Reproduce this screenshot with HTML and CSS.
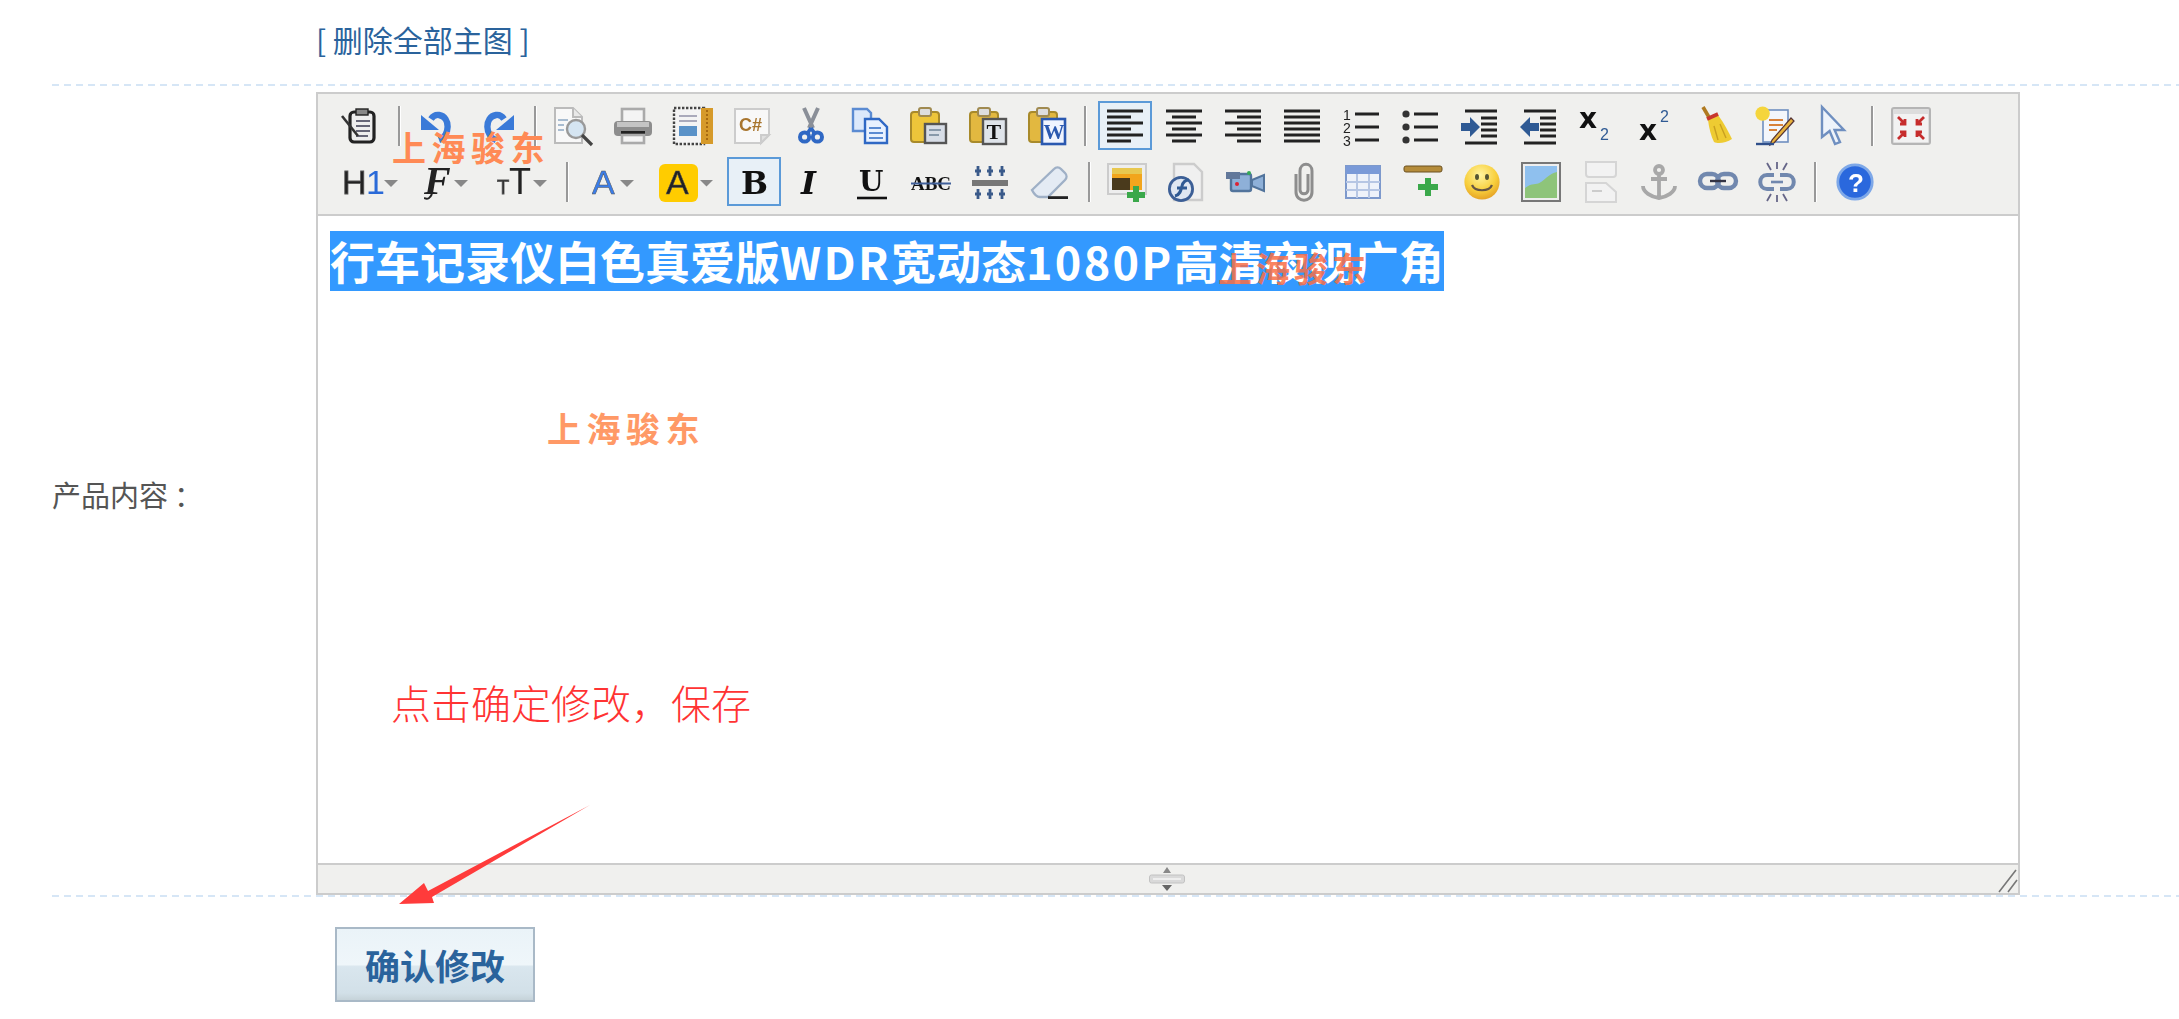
FILE: index.html
```html
<!DOCTYPE html>
<html lang="zh-CN">
<head>
<meta charset="utf-8">
<title>产品内容</title>
<link rel="stylesheet" href="styles.css">
</head>
<body>
<div class="page">
  <div class="top-row"><a class="link">[ 删除全部主图 ]</a></div>
  <div class="form-row">
    <div class="label">产品内容<span class="colon">：</span></div>
    <div class="editor">
      <div class="toolbar">
        <div class="tb-row">
          <span class="btn"><svg class="ic" viewBox="0 0 20 20"><rect x="5" y="3" width="12" height="15" rx="2" fill="#eee" stroke="#222" stroke-width="1.6"/><rect x="8" y="1.5" width="6" height="3" fill="#888" stroke="#222" stroke-width=".7"/><path d="M8 7.500h7M8 10h7M8 12.500h7M8 15h6" stroke="#667" stroke-width=".9"/><path d="M1 5l8 10" stroke="#333" stroke-width="1.300"/></svg></span>
          <i class="sep"></i>
          <span class="btn"><svg class="ic" viewBox="0 0 20 20"><path d="M10.500 17C16 15 16.500 5.500 10.500 4.500C8.500 4.200 7.500 5 6.500 6.500" fill="none" stroke="#3a7ad8" stroke-width="3.200"/><path d="M1.500 4.500v7.500h9z" fill="#3a7ad8"/></svg></span>
          <span class="btn"><svg class="ic" viewBox="0 0 20 20"><path d="M9.500 17C4 15 3.500 5.500 9.500 4.500C11.500 4.200 12.500 5 13.500 6.500" fill="none" stroke="#3a7ad8" stroke-width="3.200"/><path d="M18.500 4.500v7.500h-9z" fill="#3a7ad8"/></svg></span>
          <i class="sep"></i>
          <span class="btn"><svg class="ic" viewBox="0 0 20 20"><path d="M0.500 1h9l4.500 4.500v13h-13.500z" fill="#f8f8f8" stroke="#bbb"/><path d="M9.500 1v4.500h4.500" fill="#e8e8e8" stroke="#bbb"/><path d="M2 7h5M2 9.500h3M2 12h3" stroke="#a8bcd0"/><circle cx="11" cy="11.500" r="4.500" fill="#d5e5f2" stroke="#999" stroke-width="1.200"/><path d="M14 14.500l5 5" stroke="#444" stroke-width="1.600"/></svg></span>
          <span class="btn"><svg class="ic" viewBox="0 0 20 20"><rect x="4.500" y="1.500" width="11" height="8" fill="#f4f4f4" stroke="#aaa" stroke-width="1.300"/><rect x="0.500" y="7.500" width="19" height="7.500" rx="2" fill="#8d8d8d"/><rect x="2" y="8" width="16" height="2.500" fill="#c4c4c4"/><rect x="4" y="12.500" width="12" height="2" fill="#222"/><rect x="4.500" y="14.500" width="11" height="4" fill="#f4f4f4" stroke="#aaa" stroke-width="1.300"/></svg></span>
          <span class="btn"><svg class="ic" viewBox="0 0 20 20"><rect x="0.500" y="1" width="19" height="18" fill="#f4f4f4"/><rect x="0.500" y="1" width="15" height="18" fill="none" stroke="#444" stroke-width="1.200" stroke-dasharray="1.200 .8"/><path d="M3 5h9M3 7.500h9" stroke="#aab"/><rect x="3" y="10" width="9" height="5" fill="#5a92c8"/><rect x="14" y="1" width="6" height="18" fill="#d69a2a"/><path d="M17 2v16" stroke="#a86a10" stroke-dasharray="1 1"/></svg></span>
          <span class="btn"><svg class="ic" viewBox="0 0 20 20"><path d="M1.500 1.500h17v13l-4 4h-13z" fill="#f8f8f8" stroke="#ccc"/><path d="M18.500 14.500h-4v4z" fill="#e0e0e0" stroke="#ccc"/><text x="3.500" y="12.500" class="svg-bold" font-size="9" fill="#a8752e">C#</text></svg></span>
          <span class="btn"><svg class="ic" viewBox="0 0 20 20"><path d="M6.500 1l4.500 10M13.500 1l-4.500 10" stroke="#8a8f98" stroke-width="2"/><circle cx="6.800" cy="15.500" r="2.300" fill="none" stroke="#2f68c4" stroke-width="2"/><circle cx="13.200" cy="15.500" r="2.300" fill="none" stroke="#2f68c4" stroke-width="2"/><path d="M10 11l-2 3M10 11l2 3" stroke="#2f68c4" stroke-width="1.800"/></svg></span>
          <span class="btn"><svg class="ic" viewBox="0 0 20 20"><path d="M1.500 1.500h7l2 2v9h-9z" fill="#dce9fb" stroke="#5b8bd2" stroke-width="1.200"/><path d="M7.500 6.500h7l4 4v8h-11z" fill="#e8f1ff" stroke="#2f68c4" stroke-width="1.200"/><path d="M9.500 11h6M9.500 13.500h7M9.500 16h7" stroke="#5b8bd2"/></svg></span>
          <span class="btn"><svg class="ic" viewBox="0 0 20 20"><rect x="1" y="3" width="14" height="15" rx="1.500" fill="#edc53a" stroke="#a88a2a"/><rect x="5" y="1" width="6" height="4" rx="1" fill="#ddd" stroke="#a08a50"/><rect x="8" y="9" width="10.500" height="9.500" fill="#d7dde6" stroke="#555" stroke-width="1.200"/><path d="M10 12h6M10 14.500h5" stroke="#8899aa"/></svg></span>
          <span class="btn"><svg class="ic" viewBox="0 0 20 20"><rect x="1" y="3" width="14" height="15" rx="1.500" fill="#e2b840" stroke="#a88a2a"/><rect x="5" y="1" width="6" height="4" rx="1" fill="#ddd" stroke="#a08a50"/><rect x="7.500" y="6.500" width="11.500" height="12.500" fill="#dfe4ea" stroke="#555" stroke-width="1.200"/><text x="9.300" y="16.500" class="svg-serif" font-size="11" font-weight="700" fill="#111">T</text></svg></span>
          <span class="btn"><svg class="ic" viewBox="0 0 20 20"><rect x="1" y="3" width="14" height="15" rx="1.500" fill="#e2b840" stroke="#a88a2a"/><rect x="5" y="1" width="6" height="4" rx="1" fill="#ddd" stroke="#a08a50"/><rect x="7.500" y="6.500" width="11.500" height="12.500" fill="#f0f4ff" stroke="#2a58b0" stroke-width="1.300"/><text x="8.300" y="16.500" class="svg-serif" font-size="10.500" font-weight="700" fill="#2a58b0">W</text></svg></span>
          <i class="sep"></i>
          <span class="btn on"><svg class="ic" viewBox="0 0 20 20"><path d="M1 2.500h18M1 5.500h12M1 8.500h18M1 11.500h12M1 14.500h18M1 17.500h12" class="ln"/></svg></span>
          <span class="btn"><svg class="ic" viewBox="0 0 20 20"><path d="M1 2.500h18M4 5.500h12M1 8.500h18M4 11.500h12M1 14.500h18M4 17.500h12" class="ln"/></svg></span>
          <span class="btn"><svg class="ic" viewBox="0 0 20 20"><path d="M1 2.500h18M7 5.500h12M1 8.500h18M7 11.500h12M1 14.500h18M7 17.500h12" class="ln"/></svg></span>
          <span class="btn"><svg class="ic" viewBox="0 0 20 20"><path d="M1 2.500h18M1 5.500h18M1 8.500h18M1 11.500h18M1 14.500h18M1 17.500h18" class="ln"/></svg></span>
          <span class="btn"><svg class="ic" viewBox="0 0 20 20"><text x="1" y="7" class="svg-sans" font-size="7" fill="#222">1</text><text x="1" y="13.500" class="svg-sans" font-size="7" fill="#222">2</text><text x="1" y="20" class="svg-sans" font-size="7" fill="#222">3</text><path d="M7 4h12M7 10.500h12M7 17h12" class="ln"/></svg></span>
          <span class="btn"><svg class="ic" viewBox="0 0 20 20"><circle cx="3" cy="4" r="1.800" fill="#333"/><circle cx="3" cy="10.500" r="1.800" fill="#333"/><circle cx="3" cy="17" r="1.800" fill="#333"/><path d="M7 4h12M7 10.500h12M7 17h12" class="ln"/></svg></span>
          <span class="btn"><svg class="ic" viewBox="0 0 20 20"><path d="M3 2.500h16M3 18.500h16M11 6h8M11 9h8M11 12h8M11 15h8" class="ln"/><path d="M1 8.500h4.500v-3l5 5-5 5v-3h-4.500z" fill="#2f5a94"/></svg></span>
          <span class="btn"><svg class="ic" viewBox="0 0 20 20"><path d="M3 2.500h16M3 18.500h16M11 6h8M11 9h8M11 12h8M11 15h8" class="ln"/><path d="M10.500 8.500h-4.500v-3l-5 5 5 5v-3h4.500z" fill="#2f5a94"/></svg></span>
          <span class="btn"><svg class="ic" viewBox="0 0 20 20"><text x="1" y="11" class="svg-black" font-size="14" fill="#111">x</text><text x="11.500" y="17" class="svg-sans" font-size="8" fill="#2f5a94">2</text></svg></span>
          <span class="btn"><svg class="ic" viewBox="0 0 20 20"><text x="1" y="17" class="svg-black" font-size="14" fill="#111">x</text><text x="11.500" y="8" class="svg-sans" font-size="8" fill="#2f5a94">2</text></svg></span>
          <span class="btn"><svg class="ic" viewBox="0 0 20 20"><path d="M3.500 0.500l3.500 6" stroke="#b07a20" stroke-width="1.800"/><path d="M6 7l5-2.500c3 4 5 8 7 12c-3 2-7 2.500-9 1.500c-1.500-3-2.500-7-3-11z" fill="#eecb32"/><path d="M5.500 6.500l5.500-2.500" stroke="#c8362c" stroke-width="1.800"/><path d="M9 10l2 7M12 9l3 7" stroke="#c9a020" stroke-width=".7"/></svg></span>
          <span class="btn"><svg class="ic" viewBox="0 0 20 20"><rect x="4" y="2" width="12.500" height="16" fill="#f3f6fb" stroke="#6f8fc0" stroke-width=".8"/><circle cx="3.800" cy="3.800" r="3.600" fill="#f5d53c"/><path d="M7 7h7M7 9.500h7M7 12h4" stroke="#d8823a"/><path d="M19.500 7.500l-10 11-2 1 1-2.500 9.500-11z" fill="#e8b23c" stroke="#533" stroke-width=".6"/><path d="M0.500 19h9" stroke="#2f4f8a" stroke-width="1.200"/></svg></span>
          <span class="btn"><svg class="ic" viewBox="0 0 20 20"><path d="M4 0.500v15l3.800-3 2.700 6.500 2.500-1-2.700-6h4.700z" fill="#eef3fa" stroke="#6f8fc0" stroke-width="1.200"/></svg></span>
          <i class="sep"></i>
          <span class="btn"><svg class="ic" viewBox="0 0 20 20"><rect x="0.500" y="1" width="19" height="18" rx="1" fill="#ddd" stroke="#b5b5b5"/><rect x="1.500" y="4" width="17" height="14" fill="#f2f2f2"/><path d="M3.500 5.500l3.500 3.500M7 6.500v2.500h-2.500M16.500 5.500l-3.500 3.500M13 6.500v2.500h2.500M3.500 16.500l3.500-3.500M7 15.500v-2.500h-2.500M16.500 16.500l-3.500-3.500M13 15.500v-2.500h2.500" fill="none" stroke="#c62c2c" stroke-width="1.400"/></svg></span>
        </div>
        <div class="tb-row">
          <span class="btn w-h"><svg class="ic-h1" viewBox="0 0 28 20"><text x="0" y="16" class="svg-heavy" font-size="17" fill="#222">H</text><text x="12" y="16" class="svg-sans" font-size="17" fill="#2a6ad8">1</text><path d="M21 9h7l-3.500 3.500z" fill="#888"/></svg></span>
          <span class="btn w-f"><svg class="ic-f" viewBox="0 0 23 20"><text x="0" y="16" class="svg-serif-ib" font-size="20" fill="#222">F</text><path d="M0 18c2 1 3 0 4-2" stroke="#222" fill="none"/><path d="M15 9h7l-3.500 3.500z" fill="#888"/></svg></span>
          <span class="btn w-s"><svg class="ic-s" viewBox="0 0 25 20"><text x="0" y="16" class="svg-heavy" font-size="10" fill="#222">T</text><text x="6" y="16" class="svg-sans" font-size="18" fill="#222">T</text><path d="M18 9h7l-3.500 3.500z" fill="#888"/></svg></span>
          <i class="sep"></i>
          <span class="btn w-a"><svg class="ic-a" viewBox="0 0 21 20"><text x="0" y="16" class="svg-a" font-size="17" fill="#3b7de8">A</text><path d="M14 9h7l-3.500 3.500z" fill="#888"/></svg></span>
          <span class="btn w-b"><svg class="ic-b" viewBox="0 0 27 20"><rect x="0" y="1" width="19.500" height="19" rx="3" fill="#ffcc00"/><text x="3.500" y="16" class="svg-a" font-size="17" fill="#222">A</text><path d="M20.500 9h6.500l-3.250 3.250z" fill="#888"/></svg></span>
          <span class="btn on"><svg class="ic" viewBox="0 0 20 20"><text x="3.500" y="15.800" class="svg-dv" font-size="16" fill="#111">B</text></svg></span>
          <span class="btn"><svg class="ic" viewBox="0 0 20 20"><text x="4" y="15.800" class="svg-dv-i" font-size="16" fill="#111">I</text></svg></span>
          <span class="btn"><svg class="ic" viewBox="0 0 20 20"><text x="3.500" y="14.500" class="svg-dv" font-size="14" fill="#111">U</text><path d="M2.500 18h15" stroke="#111" stroke-width="1.300"/></svg></span>
          <span class="btn"><svg class="ic" viewBox="0 0 20 20"><text x="0" y="14" class="svg-serif" font-size="9.500" font-weight="700" fill="#111" textLength="20" lengthAdjust="spacingAndGlyphs">ABC</text><path d="M0 10.800h20" stroke="#40609a" stroke-width="1"/></svg></span>
          <span class="btn"><svg class="ic" viewBox="0 0 20 20"><rect x="1" y="9" width="18" height="3" fill="#777"/><path d="M4 2v5M10 2v5M16 2v5M4 13.500v5M10 13.500v5M16 13.500v5" stroke="#3a5a8a" stroke-width="1.400"/><path d="M2.500 4.500h3M8.500 4.500h3M14.500 4.500h3M2.500 16h3M8.500 16h3M14.500 16h3" stroke="#3a5a8a" stroke-width="1.400"/></svg></span>
          <span class="btn"><svg class="ic" viewBox="0 0 20 20"><path d="M1 14L12 3.500c1-1 2.500-1 3.500 0l2 2c1 1 1 2.500 0 3.500L9 17.500H5c-2 0-3-1.500-4-3.500z" fill="#e4ebf4" stroke="#9fb0c6" stroke-width="1.200"/><path d="M9 17.800h10" stroke="#222" stroke-width="1.400"/></svg></span>
          <i class="sep"></i>
          <span class="btn"><svg class="ic" viewBox="0 0 20 20"><rect x="0.500" y="1" width="19" height="15" fill="#eee" stroke="#ccc"/><rect x="2.500" y="3" width="15" height="11" fill="#f2a51c"/><rect x="2.500" y="3" width="15" height="3" fill="#e8c850"/><rect x="2.500" y="8" width="9" height="6" fill="#4a3a1c"/><path d="M13 12h3v3h3v3h-3v2h-3v-2h-3v-3h3z" fill="#3aa84a"/></svg></span>
          <span class="btn"><svg class="ic" viewBox="0 0 20 20"><path d="M4 1h10l4 4v14H4z" fill="#f0f0f0" stroke="#ccc" stroke-width="1.200"/><circle cx="7.500" cy="13.500" r="5.800" fill="#dfe7f2" stroke="#3c5f96" stroke-width="1.400"/><path d="M4.500 17c2.500-.5 3-3 3.500-5s1.500-3 3.500-3M5.500 13h5" stroke="#2f5a94" stroke-width="1.500" fill="none"/></svg></span>
          <span class="btn"><svg class="ic" viewBox="0 0 20 20"><rect x="3" y="6" width="10" height="8.500" rx="1" fill="#8eb0d8" stroke="#52749c" stroke-width="1.200"/><path d="M0.500 5h7v3.500h-7z" fill="#62789a"/><path d="M13.500 9l6-2.500v8l-6-2.500z" fill="#8eb0d8" stroke="#52749c"/><circle cx="6" cy="11" r="1" fill="#d23"/><circle cx="12" cy="5.500" r="1" fill="#3a5"/></svg></span>
          <span class="btn"><svg class="ic" viewBox="0 0 20 20"><path d="M6 6v9c0 5.500 8 5.500 8 0V4.500c0-4.500-6-4.500-6 0V14c0 2.500 4 2.500 4 0V6" fill="none" stroke="#8d8d8d" stroke-width="1.500"/></svg></span>
          <span class="btn"><svg class="ic" viewBox="0 0 20 20"><rect x="1.500" y="2" width="17" height="16" fill="#eef2fa" stroke="#7d99cc"/><rect x="1.500" y="2" width="17" height="4" fill="#7a9ad8"/><path d="M1.500 10h17M1.500 14h17M7 6v12M13 6v12" stroke="#b6c6e4"/></svg></span>
          <span class="btn"><svg class="ic" viewBox="0 0 20 20"><rect x="0.500" y="2" width="19" height="3" rx="1" fill="#b58c3a" stroke="#6a5020" stroke-width=".5"/><path d="M11 8h3v3h3.500v3H14v3h-3v-3H7.500v-3H11z" fill="#3aa84a"/></svg></span>
          <span class="btn"><svg class="ic" viewBox="0 0 20 20"><defs><radialGradient id="sm" cx=".45" cy=".3" r=".75"><stop offset="0" stop-color="#fff4a0"/><stop offset=".6" stop-color="#f8cf3c"/><stop offset="1" stop-color="#e29a22"/></radialGradient></defs><circle cx="10" cy="10" r="8.800" fill="url(#sm)"/><ellipse cx="7.500" cy="7.500" rx="1" ry="1.500" fill="#553"/><ellipse cx="12.500" cy="7.500" rx="1" ry="1.500" fill="#553"/><path d="M5 11.500c1.500 3.500 8.500 3.500 10 0" fill="none" stroke="#654" stroke-width="1.100"/></svg></span>
          <span class="btn"><svg class="ic" viewBox="0 0 20 20"><rect x="0.500" y="0.500" width="19" height="19" fill="#eee" stroke="#777" stroke-width="1"/><rect x="2" y="2" width="16" height="16" fill="#8fc0ee"/><path d="M2 18v-5c4-3 5-1 8-3s4-4 8-5v13z" fill="#8ec47a"/></svg></span>
          <span class="btn"><svg class="ic" viewBox="0 0 20 20"><path d="M3 0h15v6c0 1-.5 1.500-1.500 1.500h-12C3.500 7.500 3 7 3 6z" fill="#f2f2f2" stroke="#d5d5d5"/><path d="M3 10.500h10l5 4.500v5H3z" fill="#f2f2f2" stroke="#d5d5d5"/><path d="M6 14.500h5" stroke="#ccc"/></svg></span>
          <span class="btn"><svg class="ic" viewBox="0 0 20 20"><g fill="none" stroke="#a8a8a8" stroke-width="1.900"><circle cx="10" cy="4" r="2"/><path d="M10 6v12M6 8.500h8M2 12c0 3 4 5.500 8 6c4-.5 8-3 8-6"/></g></svg></span>
          <span class="btn"><svg class="ic" viewBox="0 0 20 20"><g fill="none" stroke="#7188ae" stroke-width="2.200"><rect x="1" y="6" width="9.500" height="7" rx="3.500"/><rect x="9.500" y="6" width="9.500" height="7" rx="3.500"/></g><path d="M6 9.500h8" stroke="#334" stroke-width="1.200"/></svg></span>
          <span class="btn"><svg class="ic" viewBox="0 0 20 20"><g fill="none" stroke="#7188ae" stroke-width="2"><path d="M8.500 6.500H5c-4.500 0-4.500 7 0 7h3.500M11.500 6.500H15c4.500 0 4.500 7 0 7h-3.500"/></g><path d="M7 10h6" stroke="#7188ae" stroke-width="1.300"/><path d="M5 0.500l2 3.500M10 0v3.500M15 0.500l-2 3.500M5 19.500l2-3.500M10 20v-3.500M15 19.500l-2-3.500" stroke="#668" stroke-width=".9"/></svg></span>
          <i class="sep"></i>
          <span class="btn"><svg class="ic" viewBox="0 0 20 20"><circle cx="10" cy="10" r="8.600" fill="#2a68dd" stroke="#7ea8e8" stroke-width="1.400"/><text x="6.500" y="15" class="svg-bold" font-size="13" fill="#fff">?</text></svg></span>
        </div>
      </div>
      <div class="content"><span class="selected">行车记录仪白色真爱版<span class="latin">WDR</span>宽动态<span class="latin">1080P</span>高清夜视广角</span></div>
      <div class="status">
        <svg class="grip" viewBox="0 0 36 26"><path d="M18 1l4 6h-8z" fill="#888"/><rect x="0.500" y="9" width="35" height="8" rx="2" fill="#d9d9d9" stroke="#c2c2c2"/><path d="M4 13h28" stroke="#f4f4f4" stroke-width="1.500"/><path d="M13 19h10l-5 6z" fill="#666"/></svg>
        <svg class="corner" viewBox="0 0 20 24"><path d="M1 23L18 1M10 23L19 11" stroke="#777" stroke-width="1.600"/></svg>
      </div>
    </div>
  </div>
  <div class="foot-row"><button class="submit">确认修改</button></div>

  <span class="mark mark-a">上海骏东</span>
  <span class="mark mark-b">上海骏东</span>
  <span class="mark mark-c">上海骏东</span>
  <span class="note">点击确定修改，保存</span>
  <svg class="arrow" viewBox="0 0 191 100"><polygon points="191,1 33,93 35,99 0,100 25,79 29,87" fill="#ff3b3b"/></svg>
</div>
</body>
</html>
```
FILE: styles.css
```css
* { box-sizing: border-box; }
html, body { margin: 0; padding: 0; background: #fff; }
body { font-family: "Noto Sans CJK SC", "Liberation Sans", sans-serif; color: #555; }
.page { position: relative; width: 2179px; height: 1019px; overflow: hidden; }

.top-row { height: 84px; padding: 0 0 6px 316px; display: flex; align-items: center; }
.link { font-size: 30px; line-height: 40px; color: #2a639c; }

.form-row {
  display: flex; align-items: center; margin-left: 52px; padding-top: 8px; height: 811px;
  background: repeating-linear-gradient(90deg, #d6e6f6 0 7px, transparent 7px 12px) top / 100% 2px no-repeat;
}
.label { width: 264px; font-size: 29px; line-height: 40px; color: #555; white-space: nowrap; }
.colon { font-family: "Noto Sans CJK TC", sans-serif; margin-left: 6px; }
.editor {
  width: 1704px; height: 803px; border: 2px solid #ccc; background: #fff;
  display: flex; flex-direction: column;
}

.toolbar {
  height: 122px; padding: 7px 0 8px 15px; background: #f0f0ee; border-bottom: 2px solid #ccc;
  display: flex; flex-direction: column; gap: 7px;
}
.tb-row { display: flex; gap: 5px; height: 49px; align-items: center; }
.btn {
  width: 54.1px; height: 49px; flex: none; border: 2px solid transparent;
  display: flex; align-items: center; justify-content: center;
}
.btn.on { border-color: #5b9ad8; background: #e8f0f7; }
.w-h { width: 73px; }
.w-f { width: 71px; }
.w-s { width: 69px; }
.w-a { width: 66px; }
.w-b { width: 71.5px; }
.ic { width: 40px; height: 40px; flex: none; filter: blur(.5px); overflow: visible; }
.ic-h1 { width: 56px; height: 40px; flex: none; filter: blur(.5px); }
.ic-f { width: 46px; height: 40px; flex: none; filter: blur(.5px); }
.ic-s { width: 50px; height: 40px; flex: none; filter: blur(.5px); }
.ic-a { width: 42px; height: 40px; flex: none; filter: blur(.5px); }
.ic-b { width: 54px; height: 40px; flex: none; filter: blur(.5px); }
.ln { stroke: #222; stroke-width: 1.5; fill: none; }
.sep {
  flex: none; width: 13.5px; height: 40px;
  background: linear-gradient(90deg, transparent 5.5px, #999 5.5px 7.5px, #fff 7.5px 8.5px, transparent 8.5px);
}
.svg-sans { font-family: "Liberation Sans", sans-serif; }
.svg-bold { font-family: "Liberation Sans", sans-serif; font-weight: 700; }
.svg-black { font-family: "DejaVu Sans", sans-serif; font-weight: 700; }
.svg-heavy { font-family: "Liberation Sans", sans-serif; stroke: currentColor; stroke-width: .4; }
.svg-a { font-family: "Liberation Sans", sans-serif; stroke: currentColor; stroke-width: .25; }
.svg-serif { font-family: "Liberation Serif", serif; }
.svg-serif-ib { font-family: "Liberation Serif", serif; font-style: italic; font-weight: 700; }
.svg-dv { font-family: "DejaVu Serif", serif; font-weight: 700; }
.svg-dv-i { font-family: "DejaVu Serif", serif; font-style: italic; font-weight: 700; }

.content { flex: 1; padding: 15px 0 0 12px; }
.selected {
  display: inline-block; height: 60px; line-height: 60px; font-size: 45px; font-weight: 700;
  color: #fff; background: #3399ff; white-space: nowrap;
}
.latin { letter-spacing: 2.3px; }
.status {
  height: 30px; flex: none; position: relative; background: #f0f0ee; border-top: 2px solid #ccc;
  display: flex; justify-content: center; align-items: center; padding-right: 2px;
}
.grip { width: 36px; height: 26px; filter: blur(.4px); }
.corner { position: absolute; right: 0; bottom: 0; width: 20px; height: 24px; }

.foot-row {
  height: 124px; margin-left: 52px; padding: 32px 0 0 283px;
  background: repeating-linear-gradient(90deg, #d6e6f6 0 7px, transparent 7px 12px) top / 100% 2px no-repeat;
}
.submit {
  display: block; width: 200px; height: 75px; padding: 0; border: 2px solid #a9b9c7;
  font: 700 35px/1 "Noto Sans CJK SC", sans-serif; color: #2a639c;
  background: linear-gradient(180deg, #eaf3f8 0%, #eff6fa 50%, #d9e6ee 53%, #d2e0e8 90%, #c6d3d9 100%);
}

.mark { position: absolute; font-weight: 700; font-size: 34px; line-height: 40px; letter-spacing: 5.5px; color: #ff9966; white-space: nowrap; }
.mark-a { left: 392px; top: 127px; color: #ff8a55; }
.mark-b { left: 1218px; top: 248px; color: rgba(250, 110, 70, .85); letter-spacing: 4px; }
.mark-c { left: 547px; top: 408px; }
.note { position: absolute; left: 391px; top: 677px; font-size: 40px; line-height: 50px; font-weight: 300; color: #ff3333; white-space: nowrap; }
.arrow { position: absolute; left: 399px; top: 804px; width: 191px; height: 100px; }
```
